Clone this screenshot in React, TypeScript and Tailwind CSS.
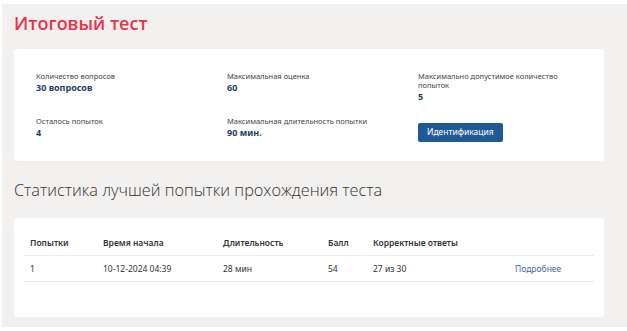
import React from "react";

const info = [
  { label: "Количество вопросов", value: "30 вопросов" },
  { label: "Максимальная оценка", value: "60" },
  { label: "Максимально допустимое количество попыток", value: "5" },
  { label: "Осталось попыток", value: "4" },
  { label: "Максимальная длительность попытки", value: "90 мин." },
];

const App = () => {
  return (
    <div className="min-h-screen bg-white pt-[4px] pl-[2px]" style={{ fontFamily: "'Noto Sans', 'Open Sans', sans-serif" }}>
      <div className="h-[323px] bg-[#f2f1ef] px-[12px] pt-[6px]">
        {/* Заголовок */}
        <h1 className="text-[18px] font-semibold leading-[26px] text-[#e8334a]" style={{ fontFamily: "'Open Sans', sans-serif" }}>
          Итоговый тест
        </h1>

        {/* Информация о тесте */}
        <div className="mt-[13px] w-[590px] rounded-[3px] bg-white pl-[22px] pr-[20px] pt-[23px] pb-[19px]">
          <div className="grid grid-cols-[191px_191px_1fr] gap-y-[15px]">
            {info.slice(0, 3).map((item) => (
              <div key={item.label} className="max-w-[140px]">
                <div className="text-[7.5px] leading-[9px] text-[#444]">{item.label}</div>
                <div className="mt-[1px] text-[9px] font-bold leading-[11px] text-[#1d3e6e]">{item.value}</div>
              </div>
            ))}
            {info.slice(3).map((item) => (
              <div key={item.label}>
                <div className="text-[7.5px] leading-[9px] text-[#444]">{item.label}</div>
                <div className="mt-[1px] text-[9px] font-bold leading-[11px] text-[#1d3e6e]">{item.value}</div>
              </div>
            ))}
            <div>
              <button className="h-[19px] rounded-[2px] bg-[#1f5a96] px-[9px] text-[8.5px] font-normal text-white">
                Идентификация
              </button>
            </div>
          </div>
        </div>

        {/* Статистика */}
        <h2 className="mt-[18px] text-[16.3px] font-light leading-[22px] text-[#333]" style={{ fontFamily: "'Open Sans', sans-serif" }}>
          Статистика лучшей попытки прохождения теста
        </h2>

        <div className="mt-[17px] w-[590px] rounded-[3px] bg-white px-[10px] pt-[14px] pb-[35px]">
          <table className="w-full text-left text-[8.5px] text-[#333]">
            <thead>
              <tr className="border-b border-[#ebebeb]">
                <th className="h-[24px] w-[79px] pl-[6px] font-semibold">Попытки</th>
                <th className="w-[120px] font-semibold">Время начала</th>
                <th className="w-[105px] font-semibold">Длительность</th>
                <th className="w-[45px] font-semibold">Балл</th>
                <th className="w-[142px] font-semibold">Корректные ответы</th>
                <th></th>
              </tr>
            </thead>
            <tbody>
              <tr className="border-b border-[#ebebeb]">
                <td className="h-[26px] pl-[6px]">1</td>
                <td>10-12-2024 04:39</td>
                <td>28 мин</td>
                <td>54</td>
                <td>27 из 30</td>
                <td className="text-[#3d6a9e]">Подробнее</td>
              </tr>
            </tbody>
          </table>
        </div>
      </div>
    </div>
  );
};

export default App;
